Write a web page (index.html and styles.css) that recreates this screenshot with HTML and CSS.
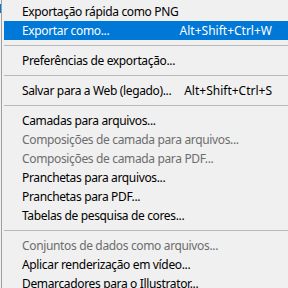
FILE: index.html
```html
<!DOCTYPE html>
<html lang="pt-BR">
<head>
<meta charset="utf-8">
<link rel="stylesheet" href="styles.css">
</head>
<body>
<div class="screen">
  <div class="underlay"><div class="mark"></div></div>
  <div class="menu">
    <div class="item"><span class="label">Exportação rápida como PNG</span></div>
    <div class="item active"><span class="label">Exportar como...</span><span class="key">Alt+Shift+Ctrl+W</span></div>
    <div class="sep"></div>
    <div class="item"><span class="label">Preferências de exportação...</span></div>
    <div class="sep"></div>
    <div class="item"><span class="label">Salvar para a Web (legado)...</span><span class="key">Alt+Shift+Ctrl+S</span></div>
    <div class="sep"></div>
    <div class="item"><span class="label">Camadas para arquivos...</span></div>
    <div class="item disabled"><span class="label">Composições de camada para arquivos...</span></div>
    <div class="item disabled"><span class="label">Composições de camada para PDF...</span></div>
    <div class="item"><span class="label">Pranchetas para arquivos...</span></div>
    <div class="item"><span class="label">Pranchetas para PDF...</span></div>
    <div class="item"><span class="label">Tabelas de pesquisa de cores...</span></div>
    <div class="sep"></div>
    <div class="item disabled"><span class="label">Conjuntos de dados como arquivos...</span></div>
    <div class="item"><span class="label">Aplicar renderização em vídeo...</span></div>
    <div class="item"><span class="label">Demarcadores para o Illustrator...</span></div>
  </div>
</div>
</body>
</html>
```
FILE: styles.css
```css
html, body {
  margin: 0;
  padding: 0;
  background: #f0f0f0;
  overflow: hidden;
}
.screen {
  display: flex;
  width: 288px;
  height: 288px;
  overflow: hidden;
  font-family: "Noto Sans", "Open Sans", sans-serif;
  font-size: 12px;
  color: #000;
}
.underlay {
  width: 1px;
  flex: none;
  background: #f0f0f0;
}
.mark {
  margin-top: 4px;
  height: 9px;
  background: #0078d7;
}
.menu {
  flex: 1;
  border-left: 1px solid #a0a0a0;
  padding: 2px 0 0 2px;
  background: #f0f0f0;
}
.item {
  height: 19px;
  display: flex;
  align-items: center;
  justify-content: space-between;
  padding: 0 16px 0 18px;
  white-space: nowrap;
  line-height: 19px;
}
.label {
  letter-spacing: -0.35px;
}
.key {
  letter-spacing: 0;
}
.item.active {
  background: #0078d7;
  color: #fff;
}
.item.disabled {
  color: #6d6d6d;
}
.sep {
  height: 11px;
  box-sizing: border-box;
  padding-top: 5px;
}
.sep::before {
  content: "";
  display: block;
  height: 1px;
  background: #b9b9b9;
}
```
